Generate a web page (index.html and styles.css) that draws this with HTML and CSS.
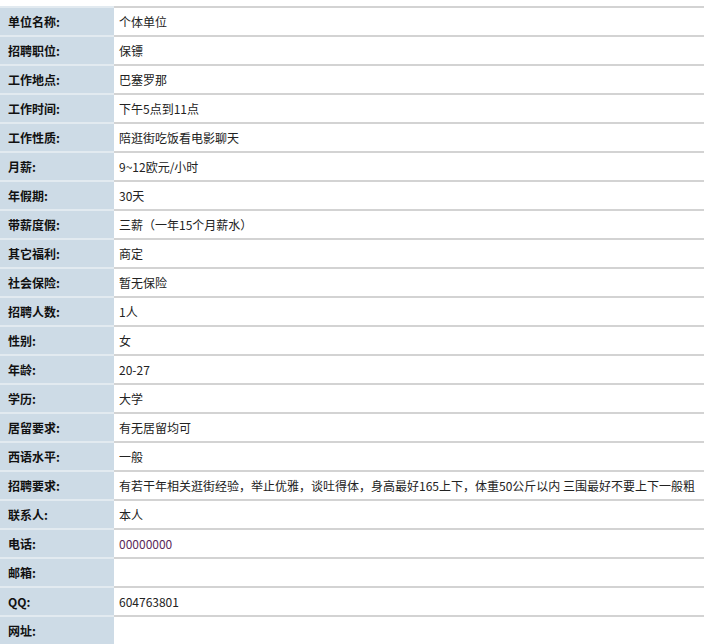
FILE: index.html
```html
<!DOCTYPE html>
<html lang="zh">
<head>
<meta charset="utf-8">
<link rel="stylesheet" href="styles.css">
</head>
<body>
<table class="info">
<tr><th>单位名称:</th><td>个体单位</td></tr>
<tr><th>招聘职位:</th><td>保镖</td></tr>
<tr><th>工作地点:</th><td>巴塞罗那</td></tr>
<tr><th>工作时间:</th><td>下午5点到11点</td></tr>
<tr><th>工作性质:</th><td>陪逛街吃饭看电影聊天</td></tr>
<tr><th>月薪:</th><td>9~12欧元/小时</td></tr>
<tr><th>年假期:</th><td>30天</td></tr>
<tr><th>带薪度假:</th><td>三薪（一年15个月薪水）</td></tr>
<tr><th>其它福利:</th><td>商定</td></tr>
<tr><th>社会保险:</th><td>暂无保险</td></tr>
<tr><th>招聘人数:</th><td>1人</td></tr>
<tr><th>性别:</th><td>女</td></tr>
<tr><th>年龄:</th><td>20-27</td></tr>
<tr><th>学历:</th><td>大学</td></tr>
<tr><th>居留要求:</th><td>有无居留均可</td></tr>
<tr><th>西语水平:</th><td>一般</td></tr>
<tr><th>招聘要求:</th><td class="nowrap">有若干年相关逛街经验，举止优雅，谈吐得体，身高最好165上下，体重50公斤以内 三围最好不要上下一般粗</td></tr>
<tr><th>联系人:</th><td>本人</td></tr>
<tr><th>电话:</th><td class="phone">00000000</td></tr>
<tr><th>邮箱:</th><td></td></tr>
<tr><th>QQ:</th><td>604763801</td></tr>
<tr><th>网址:</th><td></td></tr>
</table>
</body>
</html>
```
FILE: styles.css
```css
html, body {
  margin: 0;
  padding: 0;
  background: #fff;
}
body {
  padding-top: 6px;
  overflow: hidden;
}
.info {
  border-collapse: collapse;
  width: 704px;
  font-family: "Noto Sans CJK SC", "Liberation Sans", sans-serif;
  font-size: 12px;
  color: #222;
}
.info th,
.info td {
  height: 27px;
  padding: 0;
  border-top: 2px solid #d3d3d3;
  vertical-align: middle;
  text-align: left;
  line-height: 14px;
}
.info th {
  width: 106px;
  padding-left: 8px;
  background: #cddbe6;
  border-top-color: #e2eaf0;
  font-weight: bold;
  color: #111;
}
.info td {
  padding-left: 5px;
  white-space: nowrap;
}
.info .phone {
  color: #5a2a5a;
}
```
